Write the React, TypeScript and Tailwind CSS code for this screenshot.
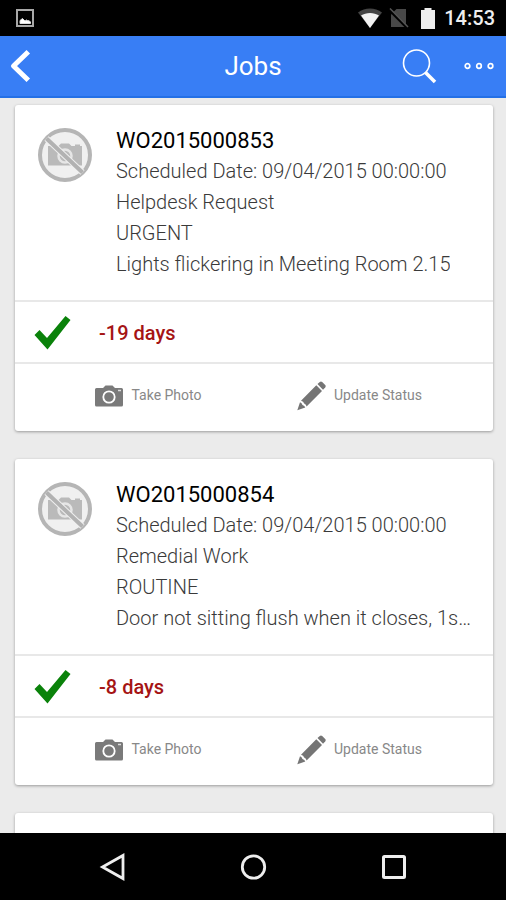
type Job = {
	id: string;
	scheduled: string;
	type: string;
	priority: string;
	description: string;
	due: string;
};

const jobs: Job[] = [
	{
		id: "WO2015000853",
		scheduled: "09/04/2015 00:00:00",
		type: "Helpdesk Request",
		priority: "URGENT",
		description: "Lights flickering in Meeting Room 2.15",
		due: "-19 days",
	},
	{
		id: "WO2015000854",
		scheduled: "09/04/2015 00:00:00",
		type: "Remedial Work",
		priority: "ROUTINE",
		description: "Door not sitting flush when it closes, 1s…",
		due: "-8 days",
	},
];

function StatusBar() {
	return (
		<div className="flex h-9 shrink-0 items-center bg-black pl-4 pr-[11px] text-[#eee]">
			<svg width="18" height="18" viewBox="0 0 18 18" fill="none">
				<rect x="1" y="1" width="16" height="16" stroke="#a8a8a8" strokeWidth="2" />
				<path d="M4 14.500V11.500L6.500 9.500L9 12L10.500 11L12 12L13 11.500L14.500 13V14.500Z" fill="#fff" stroke="#ddd" />
			</svg>
			<svg className="ml-auto" width="24" height="22" viewBox="0 0 24 22">
				<path d="M0 5.500C7 0 17 0 24 5.500L12 21Z" fill="#444" />
				<path d="M3 8.500C8 5 16 5 21 8.500L12 21Z" fill="#f2f2f2" />
			</svg>
			<svg className="ml-[7px]" width="20" height="20" viewBox="0 0 20 20">
				<path d="M2 6.500L7.500 1H17V19H2Z" fill="#484848" />
				<path d="M0 1.500L18 19.500" stroke="#000" strokeWidth="3" />
				<path d="M1 0.500L19 19" stroke="#555" strokeWidth="1.500" />
			</svg>
			<svg className="ml-[11px]" width="16" height="22" viewBox="0 0 16 22">
				<path d="M1 3H4.500V1H11.500V3H15V22H1Z" fill="#eee" />
			</svg>
			<time className="ml-2 text-[20px] font-medium leading-none">14:53</time>
		</div>
	);
}

function Header() {
	return (
		<header className="grid h-[62px] shrink-0 grid-cols-3 items-center border-b-2 border-[#2470e6] bg-[#387ef5] text-white">
			<button type="button" aria-label="Back" className="justify-self-start pl-[7px]">
				<svg width="24" height="36" viewBox="0 0 24 36" fill="none">
					<path d="M19.500 5.500L6.500 18L19.500 30.500" stroke="currentColor" strokeWidth="5" strokeLinecap="square" strokeLinejoin="round" />
				</svg>
			</button>
			<h1 className="text-center text-[26px] leading-8">Jobs</h1>
			<div className="flex items-center gap-[26px] justify-self-end pr-3">
				<button type="button" aria-label="Search">
					<svg width="36" height="36" viewBox="0 0 36 36" fill="none" stroke="currentColor">
						<circle cx="14.500" cy="15" r="13" strokeWidth="1.600" />
						<path d="M23.500 24.500L33 34" strokeWidth="3.500" />
					</svg>
				</button>
				<button type="button" aria-label="More">
					<svg width="30" height="10" viewBox="0 0 30 10" fill="none" stroke="currentColor" strokeWidth="1.700">
						<circle cx="3.500" cy="5" r="2.300" />
						<circle cx="15" cy="5" r="2.300" />
						<circle cx="26.500" cy="5" r="2.300" />
					</svg>
				</button>
			</div>
		</header>
	);
}

function NoPhotoIcon() {
	return (
		<svg className="mt-0.5 shrink-0" width="56" height="56" viewBox="0 0 56 56" role="img" aria-label="No photo">
			<circle cx="28" cy="28" r="25" fill="#f0f0f0" stroke="#b5b5b5" strokeWidth="4" />
			<path d="M11 19H13V17.500H17V19H21.500L24 16.500H32L34.500 19H38V17.500H43V19H45V38.500H11Z" fill="#bababa" />
			<circle cx="28" cy="29" r="6.500" fill="#bababa" stroke="#e6e6e6" strokeWidth="2.500" />
			<path d="M9.500 11.500L45.500 45.500" stroke="#f0f0f0" strokeWidth="6" />
			<path d="M9.500 11.500L45.500 45.500" stroke="#b2b2b2" strokeWidth="4" />
		</svg>
	);
}

function CheckIcon() {
	return (
		<svg width="38" height="36" viewBox="0 0 38 36" role="img" aria-label="Done">
			<path d="M0.500 20L5.500 15L13 23L31.500 1L36.500 5L13.500 34.500Z" fill="#0a820a" />
		</svg>
	);
}

function CameraIcon() {
	return (
		<svg width="28" height="22" viewBox="0 0 28 22">
			<path
				d="M1.500 3H8L10.500 0.500H17.500L20 3H26.500Q28 3 28 4.500V20Q28 21.500 26.500 21.500H1.500Q0 21.500 0 20V4.500Q0 3 1.500 3Z"
				fill="#7a7a7a"
			/>
			<circle cx="14" cy="12" r="5.700" fill="none" stroke="#fff" strokeWidth="1.800" />
			<path d="M23 5.500H26" stroke="#ddd" strokeWidth="1.500" />
		</svg>
	);
}

function PencilIcon() {
	return (
		<svg width="29" height="30" viewBox="0 0 29 30" fill="#757575">
			<path d="M20.500 3L22.800 0.900Q24 0 25.200 1L28.200 4Q29.200 5.200 28.200 6.400L26 8.800Z" />
			<path d="M19.300 4.200L25 10L9.600 25.600Q9.300 23.200 7.200 22.400Q6.500 20.300 4 19.800Z" />
			<path d="M3 21.200Q4.900 21.800 5.500 23.900Q7.700 24.500 8.300 26.600L0.300 29.300Z" />
		</svg>
	);
}

function JobCard({ job }: { job: Job }) {
	return (
		<li className="rounded-[3px] bg-white shadow-[0_1px_3px_rgba(0,0,0,0.35)]">
			<div className="flex gap-[23px] py-5 pl-[22px] pr-4">
				<NoPhotoIcon />
				<div className="min-w-0 text-[20px] font-light leading-[31px] text-[#3a3a3a]">
					<h2 className="text-[22px] font-normal text-black">{job.id}</h2>
					<p>Scheduled Date: {job.scheduled}</p>
					<p>{job.type}</p>
					<p>{job.priority}</p>
					<p className="truncate">{job.description}</p>
				</div>
			</div>
			<div className="flex h-16 items-center gap-[27px] border-y-2 border-[#e8e8e8] pl-[19px] pt-0.5">
				<CheckIcon />
				<strong className="text-[20px] font-medium text-[#a51414]">{job.due}</strong>
			</div>
			<div className="grid h-[67px] grid-cols-2 px-7 pb-1 text-[14px] text-[#888]">
				<button type="button" className="flex items-center justify-center gap-2">
					<CameraIcon />
					Take Photo
				</button>
				<button type="button" className="flex items-center justify-center gap-2">
					<PencilIcon />
					Update Status
				</button>
			</div>
		</li>
	);
}

function NavBar() {
	return (
		<nav className="flex h-[67px] shrink-0 items-center justify-center gap-[113px] bg-black">
			<button type="button" aria-label="Back">
				<svg width="28" height="28" viewBox="0 0 28 28" fill="none">
					<path d="M25 2.500V25.500L4.500 14Z" stroke="#eee" strokeWidth="2.800" />
				</svg>
			</button>
			<button type="button" aria-label="Home">
				<svg width="28" height="28" viewBox="0 0 28 28" fill="none">
					<circle cx="14.500" cy="14" r="11.200" stroke="#eee" strokeWidth="2.800" />
				</svg>
			</button>
			<button type="button" aria-label="Recent apps">
				<svg width="28" height="28" viewBox="0 0 28 28" fill="none">
					<rect x="3.500" y="3.500" width="21" height="21" rx="1" stroke="#eee" strokeWidth="3" />
				</svg>
			</button>
		</nav>
	);
}

export default function App() {
	return (
		<div className="flex h-screen flex-col bg-[#ebebeb] font-['Roboto',sans-serif]">
			<StatusBar />
			<Header />
			<main className="min-h-0 flex-1 overflow-hidden">
				<ul className="flex flex-col gap-7 pb-7 pl-[15px] pr-[13px] pt-[7px]">
					{jobs.map((job) => (
						<JobCard key={job.id} job={job} />
					))}
					<li className="h-40 rounded-[3px] bg-white shadow-[0_1px_3px_rgba(0,0,0,0.35)]" />
				</ul>
			</main>
			<NavBar />
		</div>
	);
}
